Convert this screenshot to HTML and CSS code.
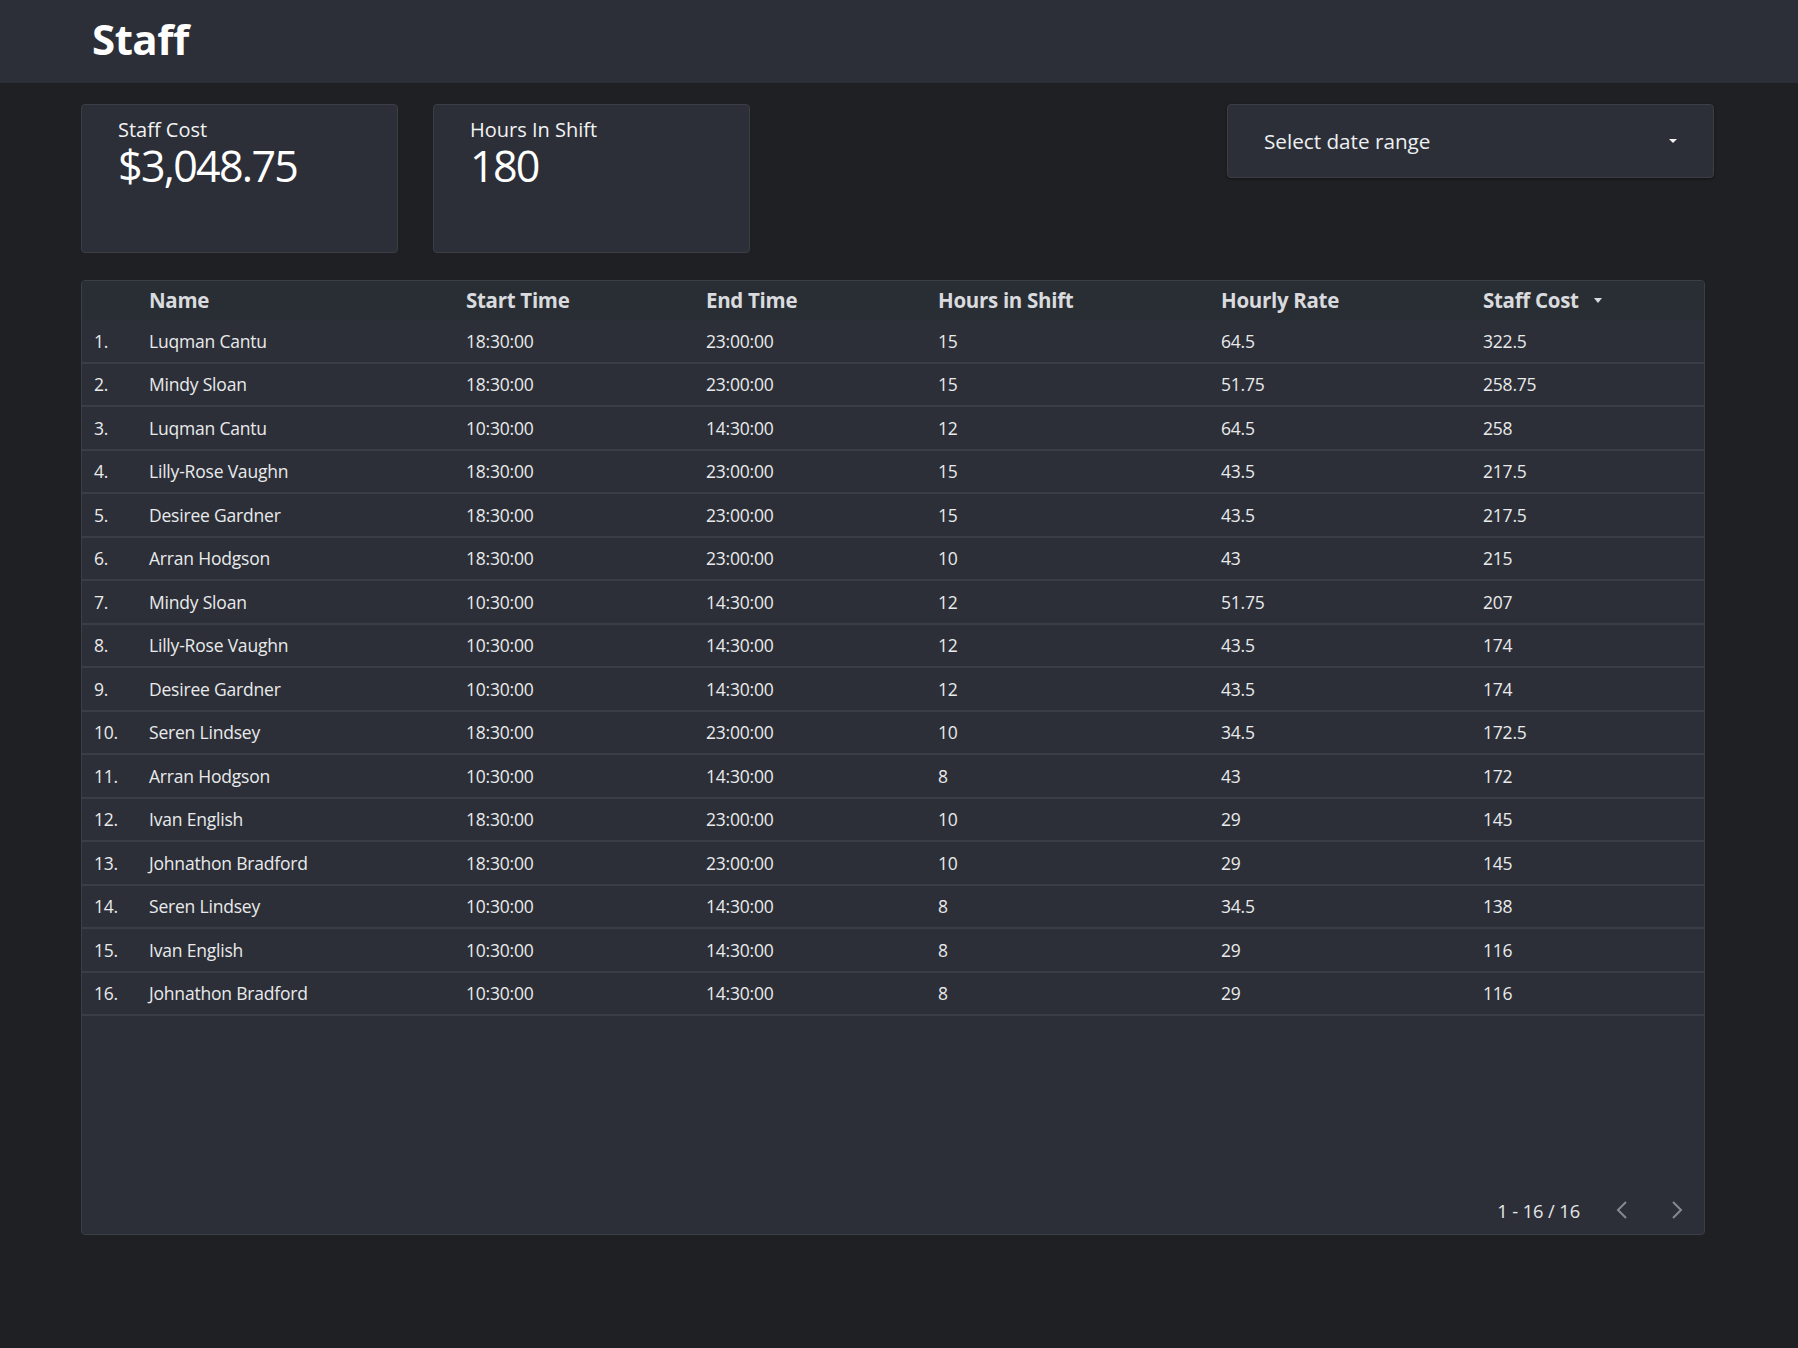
FILE: index.html
```html
<!DOCTYPE html>
<html lang="en">
<head>
<meta charset="utf-8">
<title>Staff</title>
<link rel="stylesheet" href="styles.css">
</head>
<body>
<header class="topbar"><h1 class="title">Staff</h1></header>
<main class="page">
  <section class="top-row">
    <div class="kpis">
      <div class="kpi">
        <div class="kpi-label">Staff Cost</div>
        <div class="kpi-value">$3,048.75</div>
      </div>
      <div class="kpi">
        <div class="kpi-label">Hours In Shift</div>
        <div class="kpi-value">180</div>
      </div>
    </div>
    <div class="date-select">
      <span>Select date range</span>
      <span class="caret"></span>
    </div>
  </section>

  <section class="table">
    <div class="row head">
      <div></div>
      <div>Name</div>
      <div>Start Time</div>
      <div>End Time</div>
      <div>Hours in Shift</div>
      <div>Hourly Rate</div>
      <div class="sorted">Staff Cost <span class="caret small"></span></div>
    </div>
    <div class="row"><div>1.</div><div>Luqman Cantu</div><div>18:30:00</div><div>23:00:00</div><div>15</div><div>64.5</div><div>322.5</div></div>
    <div class="row"><div>2.</div><div>Mindy Sloan</div><div>18:30:00</div><div>23:00:00</div><div>15</div><div>51.75</div><div>258.75</div></div>
    <div class="row"><div>3.</div><div>Luqman Cantu</div><div>10:30:00</div><div>14:30:00</div><div>12</div><div>64.5</div><div>258</div></div>
    <div class="row"><div>4.</div><div>Lilly-Rose Vaughn</div><div>18:30:00</div><div>23:00:00</div><div>15</div><div>43.5</div><div>217.5</div></div>
    <div class="row"><div>5.</div><div>Desiree Gardner</div><div>18:30:00</div><div>23:00:00</div><div>15</div><div>43.5</div><div>217.5</div></div>
    <div class="row"><div>6.</div><div>Arran Hodgson</div><div>18:30:00</div><div>23:00:00</div><div>10</div><div>43</div><div>215</div></div>
    <div class="row"><div>7.</div><div>Mindy Sloan</div><div>10:30:00</div><div>14:30:00</div><div>12</div><div>51.75</div><div>207</div></div>
    <div class="row"><div>8.</div><div>Lilly-Rose Vaughn</div><div>10:30:00</div><div>14:30:00</div><div>12</div><div>43.5</div><div>174</div></div>
    <div class="row"><div>9.</div><div>Desiree Gardner</div><div>10:30:00</div><div>14:30:00</div><div>12</div><div>43.5</div><div>174</div></div>
    <div class="row"><div>10.</div><div>Seren Lindsey</div><div>18:30:00</div><div>23:00:00</div><div>10</div><div>34.5</div><div>172.5</div></div>
    <div class="row"><div>11.</div><div>Arran Hodgson</div><div>10:30:00</div><div>14:30:00</div><div>8</div><div>43</div><div>172</div></div>
    <div class="row"><div>12.</div><div>Ivan English</div><div>18:30:00</div><div>23:00:00</div><div>10</div><div>29</div><div>145</div></div>
    <div class="row"><div>13.</div><div>Johnathon Bradford</div><div>18:30:00</div><div>23:00:00</div><div>10</div><div>29</div><div>145</div></div>
    <div class="row"><div>14.</div><div>Seren Lindsey</div><div>10:30:00</div><div>14:30:00</div><div>8</div><div>34.5</div><div>138</div></div>
    <div class="row"><div>15.</div><div>Ivan English</div><div>10:30:00</div><div>14:30:00</div><div>8</div><div>29</div><div>116</div></div>
    <div class="row"><div>16.</div><div>Johnathon Bradford</div><div>10:30:00</div><div>14:30:00</div><div>8</div><div>29</div><div>116</div></div>
    <div class="spacer"></div>
    <div class="pager">
      <span class="pager-text">1 - 16 / 16</span>
      <svg class="chev" width="14" height="20" viewBox="0 0 14 20"><polyline points="11,2 3,10 11,18" fill="none" stroke="#86898f" stroke-width="2"/></svg>
      <svg class="chev" width="14" height="20" viewBox="0 0 14 20"><polyline points="3,2 11,10 3,18" fill="none" stroke="#86898f" stroke-width="2"/></svg>
    </div>
  </section>
</main>
</body>
</html>
```
FILE: styles.css
```css
* { box-sizing: border-box; }
html, body {
  margin: 0;
  padding: 0;
  background: #1f2024;
  font-family: "Open Sans", "Noto Sans", sans-serif;
  color: #e8e9eb;
  height: 100%;
}
.topbar {
  height: 83px;
  background: #2c2f37;
  display: flex;
  align-items: center;
  padding-left: 92px;
}
.title {
  margin: 0;
  font-size: 42px;
  font-weight: 700;
  color: #ffffff;
  line-height: 1;
  letter-spacing: -0.5px;
  position: relative;
  top: -3px;
}
.page {
  padding: 21px 93px 0 81px;
}
.top-row {
  display: flex;
  justify-content: space-between;
  align-items: flex-start;
}
.kpis {
  display: flex;
  gap: 35px;
}
.kpi {
  width: 317px;
  height: 149px;
  background: #2c2f37;
  border: 1px solid #3b3e45;
  border-radius: 4px;
  padding: 12px 0 0 36px;
}
.kpi-label {
  font-size: 20px;
  line-height: 26px;
  color: #f2f3f4;
}
.kpi-value {
  font-size: 43px;
  line-height: 44px;
  color: #ffffff;
  letter-spacing: -1.7px;
  margin-top: 1px;
}
.date-select {
  width: 487px;
  height: 74px;
  background: #2c2f37;
  border: 1px solid #3b3e45;
  border-radius: 4px;
  box-shadow: 0 1px 3px rgba(0,0,0,0.4);
  display: flex;
  align-items: center;
  justify-content: space-between;
  padding: 0 36px 0 36px;
  font-size: 20.7px;
  color: #eef0f2;
  margin-right: -9px;
}
.caret {
  display: inline-block;
  width: 0;
  height: 0;
  border-left: 4px solid transparent;
  border-right: 4px solid transparent;
  border-top: 4px solid #f2f2f2;
}
.caret.small {
  border-top-width: 5px;
  border-top-color: #d8dadd;
  margin-left: 10px;
  vertical-align: middle;
  position: relative;
  top: -2px;
}
.table {
  margin-top: 27px;
  height: 955px;
  background: #2c2f37;
  border: 1px solid #3b3e45;
  border-radius: 4px;
  display: flex;
  flex-direction: column;
  overflow: hidden;
}
.row {
  display: grid;
  grid-template-columns: 55px 317px 240px 232px 283px 262px 1fr;
  padding-left: 12px;
  height: 43.5px;
  align-items: center;
  border-bottom: 2px solid #3a3d43;
  font-size: 17.5px;
  color: #e9eaec;
  letter-spacing: -0.2px;
  flex: none;
}
.row.head {
  height: 39px;
  border-bottom: none;
  background: #292e34;
  font-weight: 700;
  font-size: 20.5px;
  color: #d9dbde;
  letter-spacing: -0.3px;
  padding-bottom: 1px;
}
.sorted { white-space: nowrap; }
.spacer { flex: 1; }
.pager {
  height: 46px;
  display: flex;
  align-items: center;
  justify-content: flex-end;
  padding-right: 20px;
  padding-bottom: 2px;
}
.pager-text {
  font-size: 18.3px;
  color: #e6e7ea;
  letter-spacing: -0.1px;
}
.chev {
  display: block;
  margin-left: 35px;
}
.chev + .chev { margin-left: 41px; }
```
